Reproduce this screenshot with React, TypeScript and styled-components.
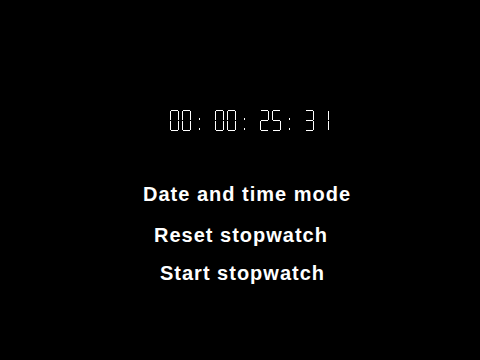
import React from "react";
import styled, { createGlobalStyle } from "styled-components";

const GlobalStyle = createGlobalStyle`
  html, body {
    margin: 0;
    padding: 0;
    background: #000;
  }
  body {
    width: 480px;
    height: 360px;
    overflow: hidden;
    font-family: "Liberation Sans", Arial, sans-serif;
  }
`;

const Screen = styled.div`
  width: 480px;
  height: 360px;
  background: #000;
  display: flex;
  flex-direction: column;
  align-items: flex-start;
  padding-top: 110px;
  box-sizing: border-box;
`;

const Clock = styled.div<{ $indent: number }>`
  display: flex;
  align-items: flex-start;
  margin-left: ${(p) => p.$indent}px;
  height: 21px;
`;

const Group = styled.div<{ $gap: number }>`
  display: flex;
  align-items: flex-start;
  margin-right: ${(p) => p.$gap}px;
`;

const DigitSvg = styled.svg<{ $left: number }>`
  display: block;
  margin-left: ${(p) => p.$left}px;
  shape-rendering: crispEdges;
`;

const ColonSvg = styled.svg`
  display: block;
  margin-left: 8px;
  shape-rendering: crispEdges;
`;

const Menu = styled.div`
  display: flex;
  flex-direction: column;
  align-items: flex-start;
  margin-top: 52px;
`;

const MenuItem = styled.div<{ $indent: number; $top: number }>`
  color: #fff;
  font-family: "Liberation Sans", Arial, sans-serif;
  font-weight: 700;
  font-size: 20px;
  line-height: 23px;
  letter-spacing: 1px;
  white-space: pre;
  margin-left: ${(p) => p.$indent}px;
  margin-top: ${(p) => p.$top}px;
`;

const SEGMENTS: Record<string, string> = {
  "0": "abcdef",
  "1": "bc",
  "2": "abged",
  "3": "abgcd",
  "4": "fgbc",
  "5": "afgcd",
  "6": "afgedc",
  "7": "abc",
  "8": "abcdefg",
  "9": "abcdfg",
};

const SEG_RECTS: Record<string, [number, number, number, number]> = {
  a: [1, 0, 7, 1],
  b: [8, 1, 1, 9],
  c: [8, 11, 1, 9],
  d: [1, 20, 7, 1],
  e: [0, 11, 1, 9],
  f: [0, 1, 1, 9],
  g: [1, 10, 7, 1],
};

function Digit({ value, left = 0 }: { value: string; left?: number }) {
  const segs = SEGMENTS[value] || "";
  return (
    <DigitSvg $left={left} width={9} height={21} viewBox="0 0 9 21" aria-hidden="true">
      {segs.split("").map((s) => {
        const [x, y, w, h] = SEG_RECTS[s];
        return <rect key={s} x={x} y={y} width={w} height={h} fill="#fff" />;
      })}
    </DigitSvg>
  );
}

function Colon() {
  return (
    <ColonSvg width={2} height={21} viewBox="0 0 2 21" aria-hidden="true">
      <rect x={0} y={8} width={1} height={2} fill="#fff" />
      <rect x={0} y={18} width={1} height={2} fill="#fff" />
    </ColonSvg>
  );
}

export default function App() {
  const groups = [
    ["0", "0"],
    ["0", "0"],
    ["2", "5"],
  ];
  return (
    <>
      <GlobalStyle />
      <Screen>
        <Clock $indent={170} role="img" aria-label="00: 00: 25: 3 1">
          {groups.map((g, i) => (
            <Group key={i} $gap={14}>
              <Digit value={g[0]} />
              <Digit value={g[1]} left={3} />
              <Colon />
            </Group>
          ))}
          <Group $gap={0}>
            <Digit value="3" />
            <Digit value="1" left={6} />
          </Group>
        </Clock>
        <Menu>
          <MenuItem $indent={143} $top={0}>Date and time mode</MenuItem>
          <MenuItem $indent={154} $top={18}>Reset stopwatch</MenuItem>
          <MenuItem $indent={160} $top={15}>Start stopwatch</MenuItem>
        </Menu>
      </Screen>
    </>
  );
}
